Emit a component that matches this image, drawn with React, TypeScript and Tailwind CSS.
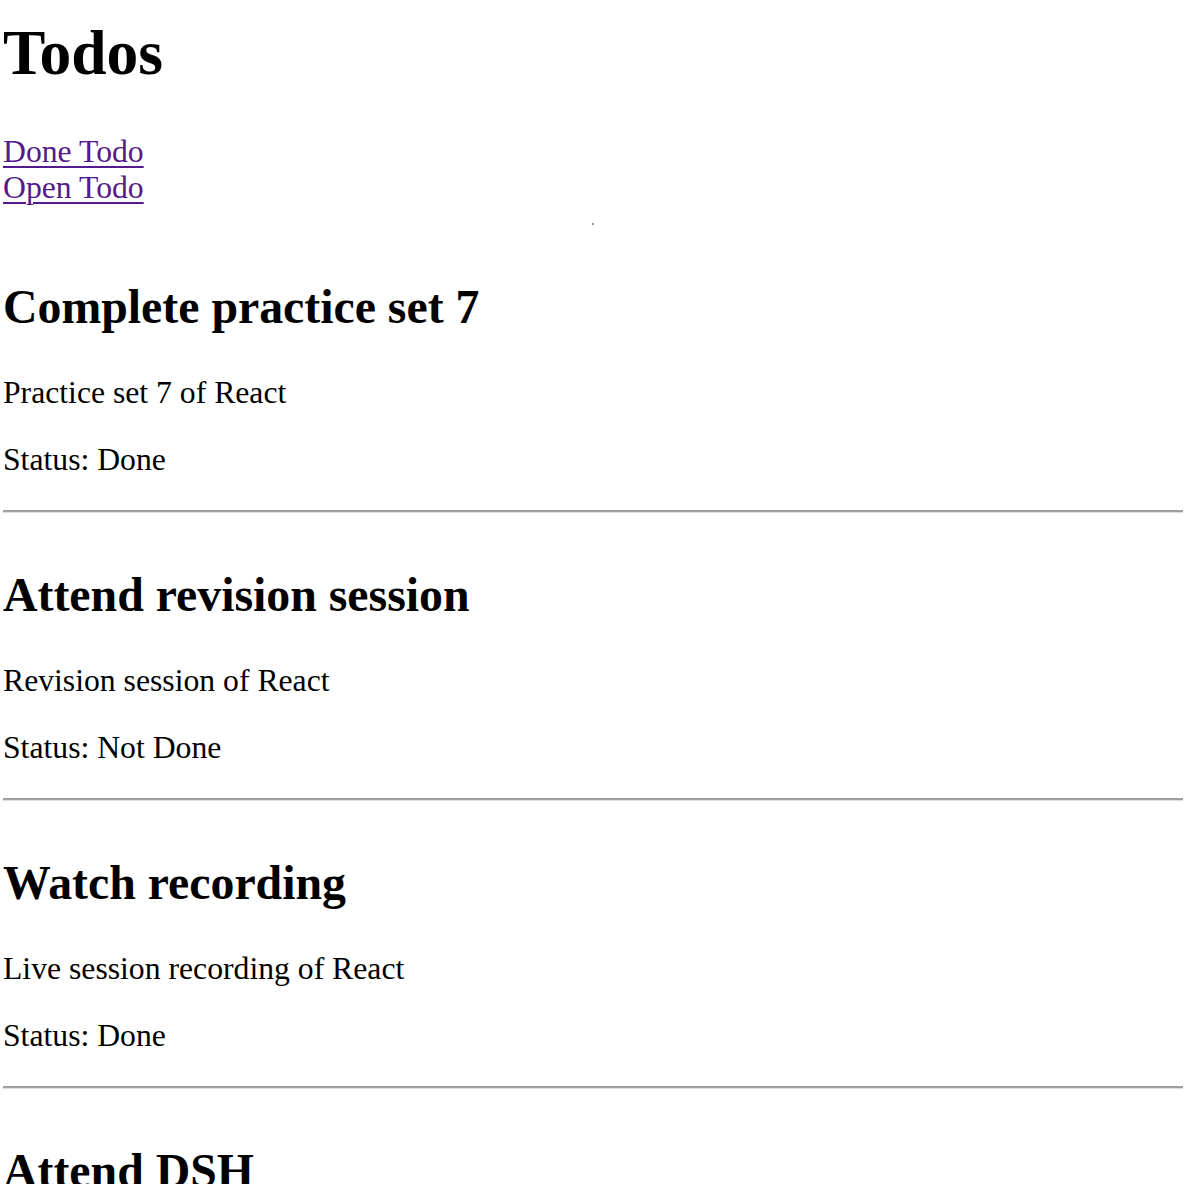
const todos = [
  { id: 1, title: 'Complete practice set 7', description: 'Practice set 7 of React', isCompleted: true },
  { id: 2, title: 'Attend revision session', description: 'Revision session of React', isCompleted: false },
  { id: 3, title: 'Watch recording', description: 'Live session recording of React', isCompleted: true },
  { id: 4, title: 'Attend DSH', description: 'Doubt solving hour of React', isCompleted: false },
];

export default function App() {
  return (
    <div className="min-h-screen bg-white pl-[3px] pr-[17px] text-black font-['Liberation_Serif','Times_New_Roman',serif]">
      <h1 className="mt-[17px] text-[63.5px] font-bold leading-[71px]">Todos</h1>

      <nav className="mt-[46px] flex flex-col items-start text-[31.7px] leading-[36px]">
        <a href="#" className="text-[#551a8b] underline decoration-[2px] underline-offset-[4px]">
          Done Todo
        </a>
        <a href="#" className="text-[#551a8b] underline decoration-[2px] underline-offset-[4px]">
          Open Todo
        </a>
      </nav>

      <div className="mt-[17px] flex justify-center">
        <span className="h-[2px] w-[2px] bg-[#9a9a9a]" />
      </div>

      <ul>
        {todos.map((todo) => (
          <li key={todo.id} className="pt-[55px]">
            <h2 className="text-[47.8px] font-bold leading-[54px]">{todo.title}</h2>
            <p className="mt-[41px] text-[31.7px] leading-[36px]">{todo.description}</p>
            <p className="mt-[31px] text-[31.7px] leading-[36px]">
              Status: {todo.isCompleted ? 'Done' : 'Not Done'}
            </p>
            <hr className="mt-[32px] h-[3px] border-0 border-t-2 border-b border-t-[#9f9f9f] border-b-[#dedede]" />
          </li>
        ))}
      </ul>
    </div>
  );
}
